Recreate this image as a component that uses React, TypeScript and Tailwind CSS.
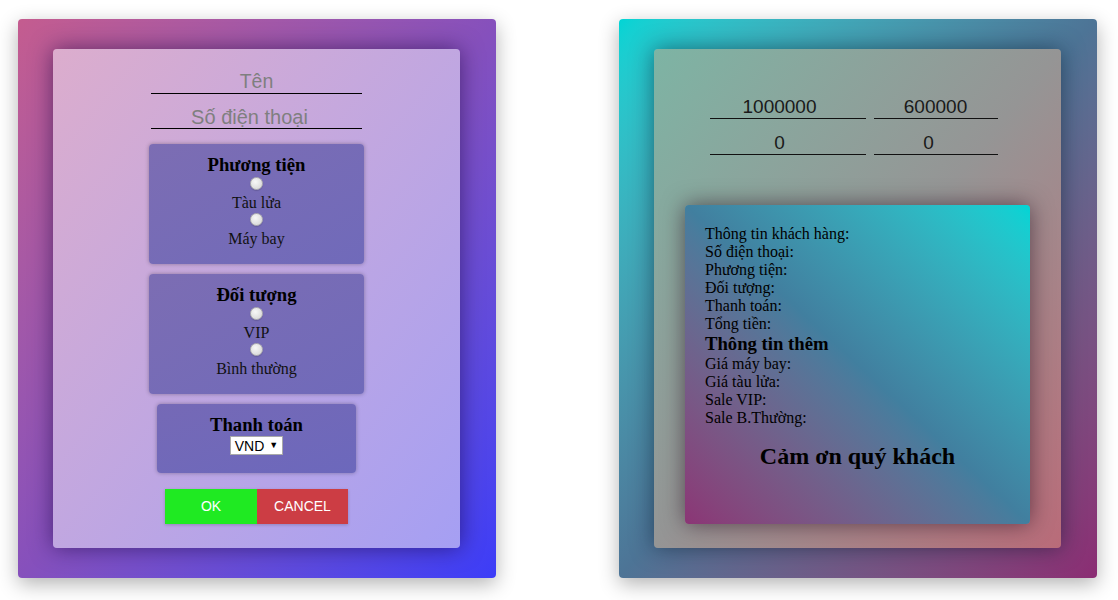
import React from "react";

const serif = "font-['Liberation_Serif','Times_New_Roman',serif]";
const sans = "font-['Liberation_Sans',Arial,sans-serif]";

const Radio = ({ name }: { name: string }) => (
    <div className="h-[15px] flex items-center justify-center">
        <input
            type="radio"
            name={name}
            className="appearance-none w-[13px] h-[13px] rounded-full border border-[#b0b0b0] bg-[radial-gradient(circle_at_40%_35%,#f7f7f7,#d2d2d2)] shadow-[0_1px_1px_rgba(0,0,0,0.15)]"
        />
    </div>
);

const OptionBox = ({ title, name, options }: { title: string; name: string; options: string[] }) => (
    <div className="w-[215px] pt-[10px] pb-[16px] rounded-[4px] bg-gradient-to-br from-[#7c6db3] to-[#706aba] shadow-[0_0_4px_rgba(0,0,0,0.3)] text-center">
        <h3 className="text-[18.7px] font-bold leading-[22px] text-black">{title}</h3>
        {options.map((o) => (
            <div key={o}>
                <Radio name={name} />
                <div className="h-[21px] pt-[3px] text-[16px] leading-[18px] text-[#111]">{o}</div>
            </div>
        ))}
    </div>
);

const LeftForm = () => (
    <div className="w-[478px] h-[559px] rounded-[4px] bg-gradient-to-br from-[#c45c8f] via-[#8650bc] to-[#3c3cf8] shadow-[0_6px_20px_rgba(0,0,0,0.3)] pl-[35px] pt-[30px]">
        <div className={`w-[407px] h-[499px] rounded-[4px] bg-gradient-to-br from-[#dcadcd] to-[#a59ff3] shadow-[0_0_22px_rgba(20,0,60,0.55)] flex flex-col items-center pt-[21px] ${serif}`}>
            <input
                placeholder="Tên"
                className={`w-[211px] h-[24px] border-b border-black bg-transparent text-center text-[19.5px] outline-none placeholder:text-[#7f7f7f] ${sans}`}
            />
            <input
                placeholder="Số điện thoại"
                className={`mt-[11px] w-[211px] h-[24px] pr-[14px] border-b border-black bg-transparent text-center text-[20px] outline-none placeholder:text-[#7f7f7f] ${sans}`}
            />
            <div className="mt-[15px]">
                <OptionBox title="Phương tiện" name="pt" options={["Tàu lửa", "Máy bay"]} />
            </div>
            <div className="mt-[10px]">
                <OptionBox title="Đối tượng" name="dt" options={["VIP", "Bình thường"]} />
            </div>
            <div className="mt-[10px] w-[199px] h-[69px] pt-[10px] rounded-[4px] bg-gradient-to-br from-[#7569b6] to-[#6c68bc] shadow-[0_0_4px_rgba(0,0,0,0.3)] flex flex-col items-center">
                <h3 className="text-[18.7px] font-bold leading-[22px] text-black">Thanh toán</h3>
                <div className={`w-[53px] h-[19px] bg-white border border-[#a9a9a9] flex items-center justify-center gap-[5px] text-[14px] leading-none text-black ${sans}`}>
                    <span>VND</span>
                    <span className="text-[9px]">▼</span>
                </div>
            </div>
            <div className={`mt-[16px] flex shadow-[0_1px_3px_rgba(0,0,0,0.2)] ${sans}`}>
                <button className="w-[92px] h-[35px] bg-[#1fea22] text-white text-[14px]">OK</button>
                <button className="w-[91px] h-[35px] bg-[#cc3d44] text-white text-[14px]">CANCEL</button>
            </div>
        </div>
    </div>
);

const NumField = ({ value, w }: { value: string; w: string }) => (
    <div className={`${w} h-[25px] border-b border-[#111] text-center text-[19px] leading-[25px] text-[#1a1a1a] ${sans}`}>
        {value}
    </div>
);

const lines1 = ["Thông tin khách hàng:", "Số điện thoại:", "Phương tiện:", "Đối tượng:", "Thanh toán:", "Tổng tiền:"];
const lines2 = ["Giá máy bay:", "Giá tàu lửa:", "Sale VIP:", "Sale B.Thường:"];

const RightBill = () => (
    <div className="w-[478px] h-[559px] rounded-[4px] bg-gradient-to-br from-[#00d5d5] via-[#4d7496] to-[#8b2c73] shadow-[0_6px_20px_rgba(0,0,0,0.3)] pl-[35px] pt-[30px]">
        <div className={`w-[407px] h-[499px] rounded-[4px] bg-gradient-to-br from-[#7db4a4] via-[#959595] to-[#b96b79] shadow-[0_0_22px_rgba(0,20,40,0.5)] flex flex-col items-center pt-[45px] ${serif}`}>
            <div className="grid grid-cols-[156px_124px] gap-x-[8px] gap-y-[11px] ml-[-8px]">
                <NumField value="1000000" w="w-[156px] pr-[16px]" />
                <NumField value="600000" w="w-[124px]" />
                <NumField value="0" w="w-[156px] pr-[16px]" />
                <NumField value="0" w="w-[124px] pr-[14px]" />
            </div>
            <div className="mt-[50px] w-[345px] h-[319px] rounded-[4px] bg-gradient-to-tr from-[#8b3575] via-[#417f9f] to-[#00d5d5] shadow-[0_0_22px_rgba(30,0,20,0.55)] pt-[20px] px-[20px] text-black">
                {lines1.map((l) => (
                    <div key={l} className="text-[16px] leading-[18px]">{l}</div>
                ))}
                <h3 className="text-[18.7px] font-bold leading-[22px]">Thông tin thêm</h3>
                {lines2.map((l) => (
                    <div key={l} className="text-[16px] leading-[18px]">{l}</div>
                ))}
                <h2 className="mt-[15px] text-center text-[24px] font-bold leading-[28px]">Cảm ơn quý khách</h2>
            </div>
        </div>
    </div>
);

export default function App() {
    return (
        <div className="w-[1118px] h-[600px] bg-white flex items-start pl-[18px] pt-[19px] gap-[123px]">
            <LeftForm />
            <RightBill />
        </div>
    );
}
